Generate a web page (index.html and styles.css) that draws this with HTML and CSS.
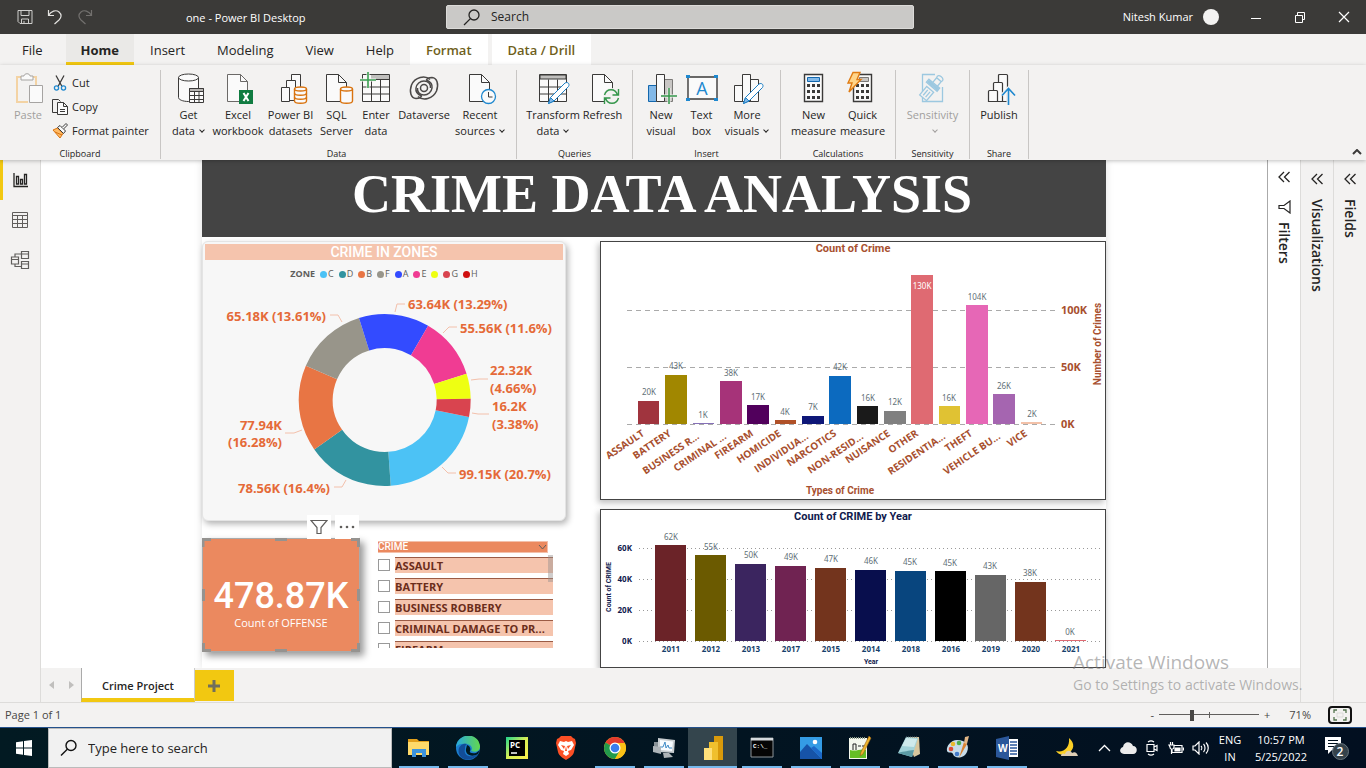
FILE: index.html
```html
<!DOCTYPE html>
<html lang="en">
<head>
<meta charset="utf-8">
<title>one - Power BI Desktop</title>
<link rel="stylesheet" href="styles.css">
</head>
<body>
<header class="titlebar">
  <div class="title-left">
    <button class="tb-btn" aria-label="Save"><svg width="16" height="16" viewBox="0 0 16 16" fill="none" stroke="#d0cfcd"><path d="M1 1.500h14v13H3l-2-2zM4 1.500v5h8v-5M4.500 14.500v-4.500h7v4.500M7 12v2"/></svg></button>
    <button class="tb-btn" aria-label="Undo"><svg width="16" height="16" viewBox="0 0 16 16" fill="none" stroke="#e4e3e1" stroke-width="1.200"><path d="M1.500 1v5.500H7M1.500 6.500C4 2 9 .5 12 3s2.500 5.500 0 8l-4.500 4"/></svg></button>
    <button class="tb-btn" aria-label="Redo"><svg width="16" height="16" viewBox="0 0 16 16" fill="none" stroke="#72706e" stroke-width="1.200"><path d="M14.500 1v5.500H9M14.500 6.500C12 2 7 .5 4 3s-2.500 5.500 0 8l4.500 4"/></svg></button>
    <span class="doc-title">one - Power BI Desktop</span>
  </div>
  <label class="title-search"><svg width="18" height="18" viewBox="0 0 18 18" fill="none" stroke="#252423" stroke-width="1.300"><circle cx="11" cy="7" r="5"/><path d="M7.400 10.600L1 17"/></svg><input type="text" placeholder="Search" aria-label="Search"></label>
  <div class="title-right">
    <span>Nitesh Kumar</span><span class="avatar"></span>
    <button class="win-btn" aria-label="Minimize"><svg width="12" height="12" viewBox="0 0 12 12" stroke="#fff"><path d="M1 7.500h10"/></svg></button>
    <button class="win-btn" aria-label="Restore"><svg width="12" height="12" viewBox="0 0 12 12" fill="none" stroke="#fff"><path d="M1.500 4.500h7v7h-7zM3.500 4V1.500h7v7H9"/></svg></button>
    <button class="win-btn" aria-label="Close"><svg width="12" height="12" viewBox="0 0 12 12" stroke="#fff" stroke-width="1.200"><path d="M1 1l10 10M11 1L1 11"/></svg></button>
  </div>
</header>

<nav class="tabs">
  <a href="#file" class="file">File</a><a href="#home" class="active">Home</a><a href="#insert">Insert</a><a href="#modeling">Modeling</a><a href="#view">View</a><a href="#help">Help</a><a href="#format" class="context">Format</a><a href="#data" class="context">Data / Drill</a>
</nav>

<section class="ribbon">
  <div class="group clipboard">
    <div class="tools">
      <button class="tool disabled"><svg viewBox="0 0 32 32" fill="none"><path d="M9 5H5v25h11M20 5h4v8" stroke="#f3d3a4" stroke-width="2"/><path d="M9 8V4h3c0-3 6-3 6 0h3v4z" fill="#fafafa" stroke="#a6a4a2"/><path d="M17.500 13.500h13v17h-13z" fill="#fafafa" stroke="#a6a4a2"/></svg><span>Paste</span></button>
      <div class="stack">
        <button><svg width="16" height="16" viewBox="0 0 16 16" fill="none"><path d="M4 .5l6 11M12 .5l-6 11" stroke="#3b3a39" stroke-width="1.300"/><circle cx="4.500" cy="13" r="2.100" stroke="#1e88cf" stroke-width="1.300"/><circle cx="11.500" cy="13" r="2.100" stroke="#1e88cf" stroke-width="1.300"/></svg>Cut</button>
        <button><svg width="16" height="16" viewBox="0 0 16 16" fill="none" stroke="#3b3a39"><path d="M5 13.500H.5V.5h6l2 2"/><path d="M5.500 3.500h6l4 4v8h-10zM11.500 3.500v4h4M8 10.500h5M8 12.500h5" fill="#fafafa"/></svg>Copy</button>
        <button><svg width="16" height="16" viewBox="0 0 16 16"><path d="M1 7l4.500-2L11 10.500 8 15z" fill="#ffbb66" stroke="#d9730f"/><path d="M3 9l7 3" stroke="#d9730f"/><path d="M5.500 4.500L8 2.500l5.500 5.500-2 2.500z" fill="#fafafa" stroke="#3b3a39"/><path d="M10 4.500l4-4 1.500 1.500-4 4" fill="#fafafa" stroke="#3b3a39"/></svg>Format painter</button>
      </div>
    </div>
    <h2>Clipboard</h2>
  </div>

  <div class="group data">
    <div class="tools">
      <button class="tool"><svg viewBox="0 0 32 32" fill="#fafafa" stroke="#3b3a39"><path d="M5.500 5.500v20c0 2 4 4 10 4 6 0 10-2 10-4v-20" /><ellipse cx="15.500" cy="5.500" rx="10" ry="3.500"/><path d="M16.500 16.500h14v14h-14z"/><path d="M16.500 16.500h14v3h-14z" fill="#b8b6b4"/><path d="M16 23.500h15M16 27.500h15M21.500 20v11M26 20v11"/></svg><span>Get<br>data<i></i></span></button>
      <button class="tool"><svg viewBox="0 0 32 32" fill="#fafafa" stroke="#6b6967"><path d="M5.500 2.500h13l7 7v20h-20z"/><path d="M18.500 2.500v7h7" fill="none"/><path d="M17 18h14v14H17z" fill="#107c41" stroke="none"/><path d="M21.500 21l5 8M26.500 21l-5 8" stroke="#fff" stroke-width="2"/></svg><span>Excel<br>workbook</span></button>
      <button class="tool"><svg viewBox="0 0 32 32" fill="#fafafa" stroke="#3b3a39"><path d="M16.500 2.500h9v24h-9z"/><path d="M11.500 8.500h9v20h-9z"/><path d="M6.500 15.500h8v14h-8z"/><g stroke="#d9730f" stroke-width="1.400"><path d="M19.500 17v12c0 3 12 3 12 0V17"/><ellipse cx="25.500" cy="17" rx="6" ry="2"/><path d="M19.500 21c0 3 12 3 12 0M19.500 25c0 3 12 3 12 0" fill="none"/></g></svg><span>Power BI<br>datasets</span></button>
      <button class="tool"><svg viewBox="0 0 32 32" fill="#fafafa" stroke="#3b3a39"><path d="M5.500 2.500h12l8 8v19h-20z"/><path d="M17.500 2.500v8h8" fill="none"/><g stroke="#d9730f" stroke-width="1.400"><path d="M19.500 17v12c0 3 12 3 12 0V17"/><ellipse cx="25.500" cy="17" rx="6" ry="2"/></g></svg><span>SQL<br>Server</span></button>
      <button class="tool"><svg viewBox="0 0 32 32" fill="#fafafa" stroke="#3b3a39"><path d="M2.500 2.500h27v27h-27z"/><path d="M11 3h18v4H11z" fill="#c0bfbd" stroke="none"/><path d="M2.500 7.500h27M2.500 15h27M2.500 22h27M11.500 7.500v22M20.500 7.500v22"/><path d="M0 8h16M8 0v16" stroke="#f3f2f1" stroke-width="3"/><path d="M0 8h16M8 0v16" stroke="#3aa052" stroke-width="1.600"/></svg><span>Enter<br>data</span></button>
      <button class="tool"><svg viewBox="0 0 32 32" fill="none" stroke="#4b4948" stroke-width="1.500"><path d="M22 7.500C17 3 7 5 3.500 13 1 20 3 26 8 26.500c3 0 5-1 5.500-2.500C9 22 7.500 19 8 16c.5-4 4-7 8-7 5 0 7 4 6.500 7"/><path d="M22 7.500C17 3 7 5 3.500 13 1 20 3 26 8 26.500c3 0 5-1 5.500-2.500C9 22 7.500 19 8 16c.5-4 4-7 8-7 5 0 7 4 6.500 7" transform="rotate(180 16 16)"/><circle cx="16" cy="16" r="3.500"/></svg><span>Dataverse</span></button>
      <button class="tool"><svg viewBox="0 0 32 32" fill="#fafafa" stroke="#3b3a39"><path d="M5.500 2.500h12l8 8v19h-20z"/><path d="M17.500 2.500v8h8" fill="none"/><circle cx="24.500" cy="24.500" r="7" stroke="#1e88cf" stroke-width="1.300"/><path d="M24.500 20v5h4" fill="none"/></svg><span>Recent<br>sources<i></i></span></button>
    </div>
    <h2>Data</h2>
  </div>

  <div class="group queries">
    <div class="tools">
      <button class="tool"><svg viewBox="0 0 32 32" fill="#fafafa" stroke="#3b3a39"><path d="M2.500 2.500h27v27h-27z"/><path d="M3 3h26v4H3z" fill="#c0bfbd"/><path d="M2.500 15h27M2.500 22h27M11.500 7.500v22M20.500 7.500v22"/><path d="M11.500 31.500l2-6L28 11c3-1.500 5 1 3.500 3.500L17 29z" stroke="#1e7fc4" fill="#fff"/><path d="M11.500 31.500l2-6 3.500 3.500z" fill="#83b9e8" stroke="#1e7fc4"/></svg><span>Transform<br>data<i></i></span></button>
      <button class="tool"><svg viewBox="0 0 32 32" fill="#fafafa" stroke="#3b3a39"><path d="M5.500 2.500h12l8 8v19h-20z"/><path d="M17.500 2.500v8h8" fill="none"/><circle cx="24.500" cy="24.500" r="8.500" fill="#f3f2f1" stroke="none"/><path d="M17.500 23c2-7 11-7 13 0M31.500 17v6h-6M31.500 26c-2 7-11 7-13 0M17.500 32v-6h6" fill="none" stroke="#35964b" stroke-width="1.400"/></svg><span>Refresh</span></button>
    </div>
    <h2>Queries</h2>
  </div>

  <div class="group insert">
    <div class="tools">
      <button class="tool"><svg viewBox="0 0 32 32" stroke="#3b3a39"><path d="M19.500 7.500h8v22h-8z" fill="#c8c6c4" stroke="#7b7977"/><path d="M3.500 13.500h8v16h-8z" fill="#83b9e8" stroke="#1267ad"/><path d="M11.500 2.500h8v27h-8z" fill="#fafafa"/><path d="M16 24h16M24 16v16" stroke="#f3f2f1" stroke-width="3"/><path d="M16 24h16M24 16v16" stroke="#35964b" stroke-width="1.500"/></svg><span>New<br>visual</span></button>
      <button class="tool"><svg viewBox="0 0 32 32"><path d="M2 5h29v22H2z" fill="#fafafa" stroke="#3b3a39" stroke-width="1.400"/><path d="M0 3h4v3H0zM28 3h4v3h-4zM0 26h4v3H0zM28 26h4v3h-4z" fill="#1e88cf"/><text x="16" y="23" class="icon-a">A</text></svg><span>Text<br>box</span></button>
      <button class="tool"><svg viewBox="0 0 32 32" stroke="#3b3a39" fill="#fafafa"><path d="M3.500 13.500h8v16h-8zM19.500 7.500h8v22h-8zM11.500 2.500h8v27h-8z"/><path d="M12.500 31.500l2-6L28 12c3-1.500 5 1 3.500 3.500L18 29z" stroke="#1e7fc4" fill="#fff"/><path d="M12.500 31.500l2-6 3.500 3.500z" fill="#83b9e8" stroke="#1e7fc4"/></svg><span>More<br>visuals<i></i></span></button>
    </div>
    <h2>Insert</h2>
  </div>

  <div class="group calc">
    <div class="tools">
      <button class="tool"><svg viewBox="0 0 32 32"><path d="M6.500 2.500h18v27h-18z" fill="#fafafa" stroke="#3b3a39" stroke-width="1.400"/><path d="M9.500 5.500h12v4h-12z" fill="#83b9e8" stroke="#1267ad"/><path d="M9 13.500h13.500M9 19.500h13.500M9 25.500h13.500" stroke="#3b3a39" stroke-width="3" stroke-dasharray="3 2"/></svg><span>New<br>measure</span></button>
      <button class="tool"><svg viewBox="0 0 32 32"><path d="M6.500 2.500h18v27h-18z" fill="#fafafa" stroke="#3b3a39" stroke-width="1.400"/><path d="M12.500 5.500h9v4h-9z" fill="#c8c6c4" stroke="#7b7977"/><path d="M9 13.500h13.500M9 19.500h13.500M9 25.500h13.500" stroke="#3b3a39" stroke-width="3" stroke-dasharray="3 2"/><path d="M6 .5h7l-3 7h4L2 20l3-9H1z" fill="#ffd58a" stroke="#e07b12" stroke-width="1.400"/></svg><span>Quick<br>measure</span></button>
    </div>
    <h2>Calculations</h2>
  </div>

  <div class="group sens">
    <div class="tools">
      <button class="tool disabled"><svg viewBox="0 0 32 32" fill="none" stroke="#9cc8e0" stroke-width="1.300"><path d="M18 2.500H5.500v27h20V15"/><g transform="rotate(40 20 10)"><path d="M12 13h14v4H12zM15 20h9v11h-9z" fill="#f3f2f1"/><path d="M17 13V7h6v6M17 7c-3-5 9-5 6 0M18 22v7M21 22v7"/><path d="M13 14h12v2H13z" fill="#9cc8e0"/></g></svg><span>Sensitivity<br><i></i></span></button>
    </div>
    <h2>Sensitivity</h2>
  </div>

  <div class="group share">
    <div class="tools">
      <button class="tool"><svg viewBox="0 0 32 32" fill="#fafafa" stroke="#3b3a39" stroke-width="1.200"><path d="M15.500 29.500v-26q0-1 1-1h7q1 0 1 1v26z"/><path d="M10.500 29.500v-18q0-1 1-1h7q1 0 1 1v18z"/><path d="M5.500 29.500v-10q0-1 1-1h7q1 0 1 1v10z"/><path d="M25.500 33V17M19 23.500l6.500-7 6.500 7" fill="none" stroke="#f3f2f1" stroke-width="4"/><path d="M25.500 33V17M19 23.500l6.500-7 6.500 7" fill="none" stroke="#1e88cf" stroke-width="1.600"/></svg><span>Publish</span></button>
    </div>
    <h2>Share</h2>
  </div>
  <button class="collapse" aria-label="Collapse ribbon"><svg width="10" height="6" viewBox="0 0 10 6" fill="none" stroke="#3b3a39" stroke-width="2"><path d="M1 5l4-4 4 4"/></svg></button>
</section>

<div class="workspace">
  <nav class="views">
    <a href="#report" class="active" aria-label="Report view"><svg width="18" height="18" viewBox="0 0 18 18" fill="none" stroke="#252423" stroke-width="1.300"><path d="M2 2v13.500h14M4.500 5.500h2v7.500h-2zM8.500 8.500h2V13h-2zM12.500 3.500h2V13h-2z"/></svg></a>
    <a href="#table" aria-label="Data view"><svg width="18" height="18" viewBox="0 0 18 18" fill="none" stroke="#605e5c"><path d="M1.500 1.500h15v15h-15zM1.500 4.500h15M1.500 8.500h15M1.500 12.500h15M6.500 4.500v12M11.500 4.500v12"/></svg></a>
    <a href="#model" aria-label="Model view"><svg width="20" height="20" viewBox="0 0 20 20" fill="none" stroke="#605e5c" stroke-width="1.200"><path d="M11.500 1.500h7v7h-7zM11.500 4h7M1.500 7h7v7h-7zM1.500 9.500h7M11.500 11.500h7v7h-7zM11.500 14h7M5 7V4h6.500M5 14v2.500h6.500"/></svg></a>
  </nav>

  <div class="middle">
    <div class="upper">
      <main class="canvas">
        <article class="page">
          <h1>CRIME DATA ANALYSIS</h1>
          <div class="board">
            <div class="left-col">
              <section class="donut-card">
                <h3>CRIME IN ZONES</h3>
                <ul class="legend">
                  <li class="name">ZONE</li>
                  <li class="c">C</li><li class="d">D</li><li class="b">B</li><li class="f">F</li><li class="a">A</li><li class="e">E</li><li class="y"></li><li class="g">G</li><li class="h">H</li>
                </ul>
                <svg class="donut" viewBox="205 287 358 233">
                  <g fill="none" stroke-width="34" transform="rotate(11.400 384.700 400)">
                    <circle cx="384.700" cy="400" r="69" pathLength="100" stroke="#4cc2f5" stroke-dasharray="20.700 79.300"/>
                    <circle cx="384.700" cy="400" r="69" pathLength="100" stroke="#3293a0" stroke-dasharray="16.400 83.600" stroke-dashoffset="-20.700"/>
                    <circle cx="384.700" cy="400" r="69" pathLength="100" stroke="#e87544" stroke-dasharray="16.280 83.720" stroke-dashoffset="-37.100"/>
                    <circle cx="384.700" cy="400" r="69" pathLength="100" stroke="#98958a" stroke-dasharray="13.610 86.390" stroke-dashoffset="-53.380"/>
                    <circle cx="384.700" cy="400" r="69" pathLength="100" stroke="#334bff" stroke-dasharray="13.290 86.710" stroke-dashoffset="-66.990"/>
                    <circle cx="384.700" cy="400" r="69" pathLength="100" stroke="#f03c93" stroke-dasharray="11.600 88.400" stroke-dashoffset="-80.280"/>
                    <circle cx="384.700" cy="400" r="69" pathLength="100" stroke="#eeff12" stroke-dasharray="4.700 95.300" stroke-dashoffset="-91.880"/>
                    <circle cx="384.700" cy="400" r="69" pathLength="100" stroke="#d9444f" stroke-dasharray="3.420 96.580" stroke-dashoffset="-96.580"/>
                  </g>
                  <g fill="none" stroke="#f3c0ab"><path d="M395 312l2-8h8M443 333l6-6h8M471 380l8-1h9M472 413l6 1h11M442 467l6 6h8M346 480l-4 7h-8M302 430l-8 3h-9M342 322l-4-7h-8"/></g>
                  <g class="donut-label">
                    <text x="408" y="309">63.64K (13.29%)</text><text x="460" y="333">55.56K (11.6%)</text>
                    <text x="490" y="375">22.32K</text><text x="490" y="393">(4.66%)</text>
                    <text x="492" y="411">16.2K</text><text x="492" y="429">(3.38%)</text>
                    <text x="459" y="479">99.15K (20.7%)</text>
                  </g>
                  <g class="donut-label left">
                    <text x="326" y="321">65.18K (13.61%)</text>
                    <text x="282" y="430">77.94K</text><text x="282" y="447">(16.28%)</text>
                    <text x="330" y="493">78.56K (16.4%)</text>
                  </g>
                </svg>
              </section>
              <div class="lower-left">
                <section class="kpi">
                  <div class="kpi-tools">
                    <button aria-label="Filters"><svg width="18" height="16" viewBox="0 0 18 16" fill="none" stroke="#605e5c" stroke-width="1.200"><path d="M1 1.500h16l-6 7v6H7v-6z"/></svg></button>
                    <button aria-label="More options"><svg width="16" height="4" viewBox="0 0 16 4" fill="#605e5c"><circle cx="2" cy="2" r="1.300"/><circle cx="8" cy="2" r="1.300"/><circle cx="14" cy="2" r="1.300"/></svg></button>
                  </div>
                  <svg class="handles" viewBox="0 0 158 114" preserveAspectRatio="none" fill="none" stroke="#959390" stroke-width="3"><path d="M1 9V1.500h8M73 1.500h12M149 1.500h7.500V9M156.500 51v12M156.500 105v7.500H149M85 112.500H73M9 112.500H1.500V105M1.500 63V51"/></svg>
                  <strong>478.87K</strong>
                  <span>Count of OFFENSE</span>
                </section>
                <section class="slicer">
                  <button class="slicer-head">CRIME<svg width="9" height="6" viewBox="0 0 9 6" fill="none" stroke="#605e5c"><path d="M1 1l3.500 4L8 1"/></svg></button>
                  <div class="slicer-list">
                    <label><input type="checkbox"><span>ASSAULT</span></label>
                    <label><input type="checkbox"><span>BATTERY</span></label>
                    <label><input type="checkbox"><span>BUSINESS ROBBERY</span></label>
                    <label><input type="checkbox"><span>CRIMINAL DAMAGE TO PR...</span></label>
                    <label><input type="checkbox"><span>FIREARM</span></label>
                    <div class="thumb"></div>
                  </div>
                </section>
              </div>
            </div>

            <div class="right-col">
              <section class="chart">
                <svg viewBox="601 242 504 257">
                  <text class="rust-title large mid" x="853" y="252">Count of Crime</text>
                  <g stroke="#aaa" stroke-dasharray="5 4"><path d="M627 310.500h428M627 367.500h428M627 424.500h428"/></g>
                  <g>
                    <rect x="638" y="401" width="21" height="23" fill="#a0343e"/><rect x="665" y="375" width="22" height="49" fill="#a18700"/><rect x="693" y="423" width="21" height="1" fill="#8671b8"/><rect x="720" y="381" width="22" height="43" fill="#a63379"/><rect x="747" y="405" width="22" height="19" fill="#51005c"/><rect x="775" y="420" width="21" height="4" fill="#b05128"/><rect x="802" y="416" width="22" height="8" fill="#0e1778"/><rect x="829" y="376" width="22" height="48" fill="#0c6abf"/><rect x="857" y="406" width="21" height="18" fill="#1a1a1a"/><rect x="884" y="411" width="22" height="13" fill="#808080"/><rect x="911" y="275" width="22" height="149" fill="#df6a72"/><rect x="939" y="406" width="21" height="18" fill="#e0c233"/><rect x="966" y="305" width="22" height="119" fill="#e667b6"/><rect x="993" y="394" width="22" height="30" fill="#a565b0"/><rect x="1021" y="422" width="21" height="2" fill="#f3c1a8"/>
                  </g>
                  <g class="value mid">
                    <text x="649" y="395">20K</text><text x="676" y="369">43K</text><text x="703" y="418">1K</text><text x="731" y="376">38K</text><text x="758" y="400">17K</text><text x="785" y="415">4K</text><text x="813" y="410">7K</text><text x="840" y="370">42K</text><text x="868" y="401">16K</text><text x="895" y="405">12K</text><text x="922" y="289" class="inside">130K</text><text x="949" y="401">16K</text><text x="977" y="300">104K</text><text x="1004" y="389">26K</text><text x="1032" y="417">2K</text>
                  </g>
                  <g class="category">
                    <text transform="translate(645 435) rotate(-34)">ASSAULT</text><text transform="translate(672 435) rotate(-34)">BATTERY</text><text transform="translate(700 438) rotate(-34)">BUSINESS R...</text><text transform="translate(727 438) rotate(-34)">CRIMINAL ...</text><text transform="translate(754 435) rotate(-34)">FIREARM</text><text transform="translate(782 435) rotate(-34)">HOMICIDE</text><text transform="translate(809 438) rotate(-34)">INDIVIDUA...</text><text transform="translate(837 435) rotate(-34)">NARCOTICS</text><text transform="translate(864 438) rotate(-34)">NON-RESID...</text><text transform="translate(891 435) rotate(-34)">NUISANCE</text><text transform="translate(919 435) rotate(-34)">OTHER</text><text transform="translate(946 438) rotate(-34)">RESIDENTIA...</text><text transform="translate(973 435) rotate(-34)">THEFT</text><text transform="translate(1001 438) rotate(-34)">VEHICLE BU...</text><text transform="translate(1028 435) rotate(-34)">VICE</text>
                  </g>
                  <g class="rust-axis"><text x="1061" y="314">100K</text><text x="1061" y="371">50K</text><text x="1061" y="428">0K</text></g>
                  <text class="rust-title mid" transform="translate(1101 344) rotate(-90)">Number of Crimes</text>
                  <text class="rust-title mid" x="840" y="494">Types of Crime</text>
                </svg>
              </section>
              <section class="chart">
                <svg viewBox="601 510 504 157">
                  <text class="navy-title mid" x="853" y="520">Count of CRIME by Year</text>
                  <g stroke="#999" stroke-dasharray="1 3"><path d="M639 548.500h463M639 579.500h463M639 610.500h463M639 641.500h463"/></g>
                  <rect x="655" y="545" width="31" height="96" fill="#6b2328"/><rect x="695" y="555" width="31" height="86" fill="#6b5a00"/><rect x="735" y="564" width="31" height="77" fill="#3b255f"/><rect x="775" y="566" width="31" height="75" fill="#702352"/><rect x="815" y="568" width="31" height="73" fill="#73341d"/><rect x="855" y="570" width="31" height="71" fill="#080e4d"/><rect x="895" y="571" width="31" height="70" fill="#08457e"/><rect x="935" y="571" width="31" height="70" fill="#000"/><rect x="975" y="575" width="31" height="66" fill="#666"/><rect x="1015" y="582" width="31" height="59" fill="#73341d"/><rect x="1055" y="640" width="31" height="1" fill="#df6a72"/>
                  <g class="value mid"><text x="671" y="540">62K</text><text x="711" y="550">55K</text><text x="751" y="558">50K</text><text x="791" y="560">49K</text><text x="831" y="562">47K</text><text x="871" y="564">46K</text><text x="910" y="565">45K</text><text x="950" y="566">45K</text><text x="990" y="569">43K</text><text x="1030" y="576">38K</text><text x="1070" y="635">0K</text></g>
                  <g class="year mid"><text x="671" y="652">2011</text><text x="711" y="652">2012</text><text x="751" y="652">2013</text><text x="791" y="652">2017</text><text x="831" y="652">2015</text><text x="871" y="652">2014</text><text x="911" y="652">2018</text><text x="951" y="652">2016</text><text x="991" y="652">2019</text><text x="1031" y="652">2020</text><text x="1071" y="652">2021</text></g>
                  <g class="navy-axis"><text x="632" y="551">60K</text><text x="632" y="582">40K</text><text x="632" y="613">20K</text><text x="632" y="644">0K</text></g>
                  <text class="navy-small mid" transform="translate(611 587) rotate(-90)">Count of CRIME</text>
                  <text class="navy-small mid" x="871" y="664">Year</text>
                </svg>
              </section>
            </div>
          </div>
        </article>
      </main>
      <aside class="pane filters"><button aria-label="Expand filters"><svg width="12" height="12" viewBox="0 0 12 12" fill="none" stroke="#252423" stroke-width="1.300"><path d="M6 1L1 6l5 5M11.500 1l-5 5 5 5"/></svg></button><svg class="funnel" width="14" height="14" viewBox="0 0 14 14" fill="none" stroke="#252423" stroke-width="1.200"><path d="M13 1v12L7 8.500H2v-3h5z"/></svg><span>Filters</span></aside>
    </div>
    <nav class="page-tabs">
      <button class="arrow" aria-label="Previous page"><svg width="5" height="8" viewBox="0 0 5 8" fill="#c0bfbd"><path d="M5 0v8L0 4z"/></svg></button>
      <button class="arrow" aria-label="Next page"><svg width="5" height="8" viewBox="0 0 5 8" fill="#c0bfbd"><path d="M0 0v8l5-4z"/></svg></button>
      <a href="#crime-project" class="page-tab">Crime Project</a>
      <button class="add" aria-label="New page"><svg width="12" height="12" viewBox="0 0 12 12" stroke="#716f5c" stroke-width="3"><path d="M0 6h12M6 0v12"/></svg></button>
    </nav>
  </div>

  <aside class="pane"><button aria-label="Expand visualizations"><svg width="12" height="12" viewBox="0 0 12 12" fill="none" stroke="#252423" stroke-width="1.300"><path d="M6 1L1 6l5 5M11.500 1l-5 5 5 5"/></svg></button><span>Visualizations</span></aside>
  <aside class="pane"><button aria-label="Expand fields"><svg width="12" height="12" viewBox="0 0 12 12" fill="none" stroke="#252423" stroke-width="1.300"><path d="M6 1L1 6l5 5M11.500 1l-5 5 5 5"/></svg></button><span>Fields</span></aside>
  <div class="watermark"><b>Activate Windows</b><span>Go to Settings to activate Windows.</span></div>
</div>

<footer class="status">
  <span>Page 1 of 1</span>
  <div class="zoom"><button aria-label="Zoom out">-</button><input type="range" min="10" max="200" value="71" aria-label="Zoom"><button aria-label="Zoom in">+</button><span>71%</span>
  <button class="fit" aria-label="Fit to page"><svg width="14" height="12" viewBox="0 0 14 12" fill="none" stroke="#54744f" stroke-width="1.300"><path d="M1 4V1h3M10 1h3v3M13 8v3h-3M4 11H1V8"/><path d="M4 4h6v4H4z" stroke="#cfcdcb" stroke-width=".6"/></svg></button></div>
</footer>

<div class="taskbar">
  <button class="start" aria-label="Start"><svg width="16" height="16" viewBox="0 0 16 16" fill="#fff"><path d="M0 2.200l7-1v6.300H0zM8 1l8-1v7.500H8zM0 8.500h7v6.300l-7-1zM8 8.500h8V16l-8-1z"/></svg></button>
  <label class="task-search"><svg width="18" height="18" viewBox="0 0 18 18" fill="none" stroke="#111" stroke-width="1.400"><circle cx="11" cy="6.500" r="5"/><path d="M7.300 10.200L1 16.500"/></svg><input type="text" placeholder="Type here to search" aria-label="Type here to search"></label>
  <div class="apps">
    <button class="open" aria-label="File Explorer"><svg viewBox="0 0 24 24"><path d="M1 3h9l2 2h10v5H1z" fill="#e3a01b"/><path d="M1 6h21v13H1z" fill="#ffda6a"/><path d="M5 21v-8h14v8h-4v-4H9v4z" fill="#3c93dc"/></svg></button>
    <button class="open" aria-label="Edge"><svg viewBox="0 0 24 24"><defs><linearGradient id="edgeTop" x1="0" x2="1"><stop offset="0" stop-color="#28a9e0"/><stop offset="1" stop-color="#63d84d"/></linearGradient></defs><circle cx="12" cy="12" r="12" fill="#1b7fd0"/><path d="M0 11C1-3 22-5 24 10c.3 5-4 7-9 5 2-2 1-6-4-7C6 7 2 8 0 11z" fill="url(#edgeTop)"/><path d="M9 13c-2 6 5 10 13 5-4 7-16 8-19 0-2-7 3-11 8-10-2 1-2 3-2 5z" fill="#124d98"/><path d="M11 9c3 1 4 4 3 6-1 1 1 3 6 2l4-3-2 4c-7 4-13 0-12-5z" fill="#001a24"/></svg></button>
    <button aria-label="PyCharm"><svg viewBox="0 0 24 24"><defs><linearGradient id="py" x1="0" x2="1" y1="0" y2="1"><stop offset="0" stop-color="#20d68d"/><stop offset=".5" stop-color="#d8ee55"/><stop offset="1" stop-color="#fcf04c"/></linearGradient></defs><path d="M1 1h22v22H1z" fill="url(#py)"/><path d="M4 4h16v16H4z"/><text x="5" y="12" class="icon-pc">PC</text><path d="M6 17h6" stroke="#fff" stroke-width="1.500"/></svg></button>
    <button aria-label="Brave"><svg viewBox="0 0 24 24"><path d="M7 0h10l2 2 2 1 1 4-2 9c-1 4-5 6-8 8-3-2-7-4-8-8L2 7l1-4 2-1z" fill="#fb4f25"/><path d="M6 5l4 1 2-1 2 1 4-1 2 4-3 5-3 1 1 3-3 2-3-2 1-3-3-1-3-5z" fill="#fff"/><path d="M7 9l4 1-1 3zM17 9l-4 1 1 3zM12 10l-1 5h2z" fill="#fb4f25"/></svg></button>
    <button class="open" aria-label="Chrome"><svg viewBox="0 0 24 24"><circle cx="12" cy="12" r="11" fill="#fbc116"/><path d="M12 12L2.500 6.500a11 11 0 0 1 19 0z" fill="#e33b2e"/><path d="M12 12L2.500 6.500a11 11 0 0 0 9.500 16.500l5-8z" fill="#229a4c"/><path d="M12 7h9.800a11 11 0 0 1-9.800 16l4.500-8z" fill="#fbc116"/><circle cx="12" cy="12" r="5.500" fill="#fff"/><circle cx="12" cy="12" r="4.300" fill="#3b7ded"/></svg></button>
    <button class="open" aria-label="System monitor"><svg viewBox="0 0 24 24"><path d="M2 6h9v10H2z" fill="#899297"/><path d="M6 2l17 2-1 13-16-1z" fill="#c9ced1"/><path d="M8 4l13 1.500-1 9.500-12-1z" fill="#f7fbff"/><path d="M8 11h3l2-5 1 6 2-3 1 3h3" fill="none" stroke="#3f8bc7"/><path d="M1 10l8 1v7l-8-2zM11 17h6l4 4-9 1z" fill="#aeb4b8"/></svg></button>
    <button class="open current" aria-label="Power BI"><svg viewBox="0 0 24 24"><path d="M13 0h9v24h-9z" fill="#d99a0b"/><path d="M8 6h9v18H8z" fill="#f0c02e"/><path d="M3 12h8v12H3z" fill="#ffe07a"/></svg></button>
    <button class="open" aria-label="Command prompt"><svg viewBox="0 0 24 24"><path d="M1 2h22v19H1z" fill="#050505" stroke="#8d9499"/><path d="M1 2h22v2.500H1z" fill="#d4d9dc"/><text x="3" y="12" class="icon-cmd">C:\_</text></svg></button>
    <button class="open" aria-label="Photos"><svg viewBox="0 0 24 24"><path d="M1 1h22v22H1z" fill="#349ce5"/><path d="M1 16l7-8 15 15H1z" fill="#1653a8"/><path d="M12 12l3-2 8 7v6z" fill="#1c68c8"/><circle cx="16" cy="6" r="2.300" fill="#fff"/></svg></button>
    <button class="open" aria-label="Notepad++"><svg viewBox="0 0 24 24"><path d="M1 2h18v21H1z" fill="#f5f8ed"/><path d="M2 14c7 2 10-2 16 0v8H2z" fill="#65be25"/><path d="M2 2h16" stroke="#8b9a8a" stroke-width="2" stroke-dasharray="1 1"/><path d="M5 14V8h3v6M10 10h3M14 10h3" fill="none" stroke="#222"/><path d="M21 0l2 2-8 16-3 2 1-4z" fill="#efb52d" stroke="#956018" stroke-width=".6"/></svg></button>
    <button class="open" aria-label="Notepad"><svg viewBox="0 0 24 24"><path d="M9 1h13l1 17-6 3z" fill="#d8c69d"/><path d="M9 1l12 1-6 19-14-4z" fill="#a3d3d9"/><path d="M9 2l11 1-3 8-12-1z" fill="#cfeaec"/><path d="M1 17c7-2 10-2 16-3l-2 7z" fill="#5c9ba5"/><path d="M9 1h12" stroke="#62737a" stroke-dasharray="1 1"/></svg></button>
    <button class="open" aria-label="Paint"><svg viewBox="0 0 24 24"><path d="M11 4C20 4 24 9 21 16c-3 7-13 7-14 2-1-3-5 0-6-3C0 10 5 4 11 4z" fill="#c8dce9"/><circle cx="5" cy="13" r="2.300" fill="#db4b35"/><circle cx="7" cy="8" r="2.300" fill="#e9b92e"/><circle cx="13" cy="7" r="2.300" fill="#4fae4f"/><circle cx="11" cy="18" r="2.300" fill="#447ac9"/><path d="M18 6l3 2-8 14z" fill="#d98332"/><path d="M18 7l1-6 4-1-2 8z" fill="#e3b786"/></svg></button>
    <button class="open" aria-label="Word"><svg viewBox="0 0 24 24"><path d="M11 3h12v18H11z" fill="#fff"/><path d="M15 6h7M15 9h7M15 12h7M15 15h7M15 18h7" stroke="#2b579a" stroke-width="1.500"/><path d="M1 3l13-3v24L1 21z" fill="#2b579a"/><text x="3" y="16" class="icon-w">W</text></svg></button>
  </div>
  <div class="tray">
    <button class="wide" aria-label="Weather"><svg width="24" height="20" viewBox="0 0 24 20"><path d="M13 0c6 5 6 12-2 16-5 2-9 0-11-3C8 15 14 9 13 0z" fill="#fbcf26"/><path d="M5 18c0-3 3-3 4-2 1-4 6-4 7-1 3-2 5 0 6 3z" fill="#dfcfb5"/></svg></button>
    <button aria-label="Show hidden icons"><svg width="13" height="8" viewBox="0 0 13 8" fill="none" stroke="#fff" stroke-width="1.300"><path d="M1 7l5.500-5.500L12 7"/></svg></button>
    <button aria-label="OneDrive"><svg width="17" height="12" viewBox="0 0 17 12"><path d="M4 12C-1 12-1 6 3 5c1-6 8-6 10-1 5 0 5 8 0 8z" fill="#ececec"/></svg></button>
    <button aria-label="Meet now"><svg width="12" height="16" viewBox="0 0 12 16" fill="none" stroke="#fff" stroke-width="1.200"><path d="M1 4.500h7v7H1zM8 7l3-1.500v5L8 9M2 2c2-1.500 4-1.500 6 0M2 14c2 1.500 4 1.500 6 0"/></svg></button>
    <button aria-label="Battery"><svg width="16" height="13" viewBox="0 0 16 13" fill="none" stroke="#fff" stroke-width="1.200"><path d="M6 3.500h8v7H4V8M15.500 5.500v3M1 3h5v2c0 3-4 3-4 0zM2.500 0v3M4.500 0v3M3.500 7v5"/><path d="M7 6h5v3H7z" fill="#fff"/></svg></button>
    <button aria-label="Volume"><svg width="17" height="14" viewBox="0 0 17 14" fill="none" stroke="#fff" stroke-width="1.200"><path d="M1 5v4h2l4 4V1L3 5zM9 5c1 1 1 3 0 4M11.500 3c2 2 2 6 0 8M14 1.500c3 3 3 8 0 11"/></svg></button>
    <button class="lang">ENG<br>IN</button>
    <button class="clock">10:57 PM<br>5/25/2022</button>
    <button class="notice" aria-label="Notifications"><svg width="26" height="24" viewBox="0 0 26 24"><path d="M1 1h16v13H8l-4 4v-4H1z" fill="#fff"/><path d="M4 4.500h10M4 7.500h10M4 10.500h6" stroke="#00101c"/><circle cx="16.500" cy="15.500" r="8" fill="#35424a" stroke="#68757d"/><text x="16" y="20" class="icon-n">2</text></svg></button>
  </div>
</div>
</body>
</html>
```

FILE: styles.css
```css
* { box-sizing: border-box; }
body { margin: 0; height: 100vh; min-height: 640px; display: flex; flex-direction: column; overflow: hidden; background: #f3f2f1; color: #252423; font: 11px/16px "Open Sans", "Noto Sans", sans-serif; }
button, input { font: inherit; color: inherit; }
button { border: 0; padding: 0; background: none; }
input { padding: 0; }
a { color: inherit; text-decoration: none; }
h1, h2, h3, ul { margin: 0; padding: 0; font-weight: 400; list-style: none; }
svg { display: block; flex: none; }

.titlebar { height: 34px; flex: none; display: grid; grid-template-columns: 446fr 468fr 452fr; align-items: center; background: #3b3a38; color: #fff; }
.title-left { display: flex; align-items: center; gap: 14px; padding-left: 17px; }
.doc-title { padding-left: 79px; padding-top: 2px; }
.title-search { height: 24px; display: flex; align-items: center; gap: 10px; padding-left: 16px; background: #cac9c7; border: 1px solid #dcdbd9; border-radius: 2px; }
.title-search input { flex: 1; min-width: 0; border: 0; background: none; font-size: 12px; }
input::placeholder { color: #252423; opacity: 1; }
.title-right { display: flex; align-items: center; justify-content: flex-end; height: 34px; }
.avatar { width: 16px; height: 16px; margin: 0 15px 0 10px; border-radius: 50%; background: #f3f2f1; }
.win-btn { width: 44px; height: 34px; display: flex; align-items: center; justify-content: center; }

.tabs { height: 31px; flex: none; display: flex; padding-left: 6px; font-size: 13px; line-height: 32px; }
.tabs a { padding: 0 16px; }
.tabs .file { margin-right: 7px; }
.tabs .active { padding: 0 15px; font-weight: 700; background: #eae9e7; border-bottom: 3px solid #f2c811; }
.tabs .context { padding: 0 16px; font-weight: 600; color: #6f5f1c; background: #fff; margin-right: 4px; }

.ribbon { height: 95px; flex: none; display: flex; position: relative; z-index: 2; padding: 5px 0 1px; box-shadow: 0 1px 4px rgba(0, 0, 0, .25); background: #f3f2f1; }
.group { display: flex; flex-direction: column; justify-content: space-between; border-right: 1px solid #c8c6c4; padding: 0 8px; }
.group h2 { font-size: 9px; line-height: 10px; text-align: center; }
.tools { display: grid; justify-content: center; }
.tool { display: flex; flex-direction: column; align-items: center; white-space: nowrap; padding-top: 2px; gap: 3px; }
.tool svg { width: 32px; height: 32px; overflow: visible; }
.tool i { display: inline-block; width: 4px; height: 4px; margin: 0 1px 3px 5px; border: solid currentColor; border-width: 0 1px 1px 0; transform: rotate(45deg); }
.disabled { color: #a19f9d; }
.clipboard { width: 161px; padding: 0; }
.clipboard .tools { grid-template-columns: 40px 1fr; padding-left: 8px; justify-content: start; }
.stack { display: flex; flex-direction: column; padding: 1px 0 0 4px; }
.stack button { height: 24px; display: flex; align-items: center; gap: 4px; white-space: nowrap; }
.data { padding-left: 4px; }
.data .tools { grid-template-columns: 47px 52px 53px 39px 40px 56px 56px; }
.queries .tools { grid-template-columns: 56px 43px; }
.insert .tools { grid-template-columns: 40px 41px 50px; }
.calc .tools { grid-template-columns: 49px 49px; }
.sens .tools { grid-template-columns: 57px; }
.share .tools { grid-template-columns: 42px; }
.icon-a { font: 18px "Open Sans", sans-serif; fill: #1e88cf; text-anchor: middle; }
.collapse { margin-left: auto; align-self: flex-end; padding: 4px 4px; }

.workspace { flex: 1; min-height: 0; display: flex; position: relative; border-bottom: 1px solid #dddcda; }
.views { width: 41px; flex: none; display: flex; flex-direction: column; border-right: 1px solid #dddcda; }
.views a { height: 40px; display: flex; align-items: center; justify-content: center; }
.views .active { border-left: 3px solid #f2c811; padding-right: 2px; }
.middle { flex: 1; min-width: 0; display: flex; flex-direction: column; }
.upper { flex: 1; min-height: 0; display: flex; background: #fff; }
.canvas { flex: 1; min-width: 0; overflow: hidden; }
.page { width: 74%; min-width: 904px; max-width: 904px; margin: 0 auto; background: #fff; box-shadow: 0 0 8px rgba(0, 0, 0, .12); }
.page h1 { height: 77px; background: #444; color: #fff; text-align: center; font: 700 54px/68px "Liberation Serif", serif; padding-left: 16px; }
.board { display: flex; gap: 34px; padding-top: 4px; }
.left-col { flex: 364; min-width: 0; }
.right-col { flex: 506; min-width: 0; display: flex; flex-direction: column; gap: 9px; }

.donut-card { background: #f7f7f7; border: 1px solid #e4e4e4; border-radius: 6px; box-shadow: 2px 3px 6px rgba(0, 0, 0, .3); padding: 2px 2px 0; }
.donut-card h3 { background: #f5c4ad; color: #fff; text-align: center; font: 500 14px/16px Roboto, sans-serif; }
.legend { display: flex; justify-content: center; gap: 5px; height: 27px; align-items: center; font-size: 9px; line-height: 12px; color: #605e5c; padding-top: 1px; }
.legend .name { font-weight: 700; font-size: 9px; }
.legend .name::before { display: none; }
.legend li { display: flex; align-items: center; gap: 1px; }
.legend li::before { content: ""; width: 7px; height: 7px; border-radius: 50%; background: currentColor; }
.legend .c::before { background: #4cc2f5; }
.legend .d::before { background: #3293a0; }
.legend .b::before { background: #e87544; }
.legend .f::before { background: #98958a; }
.legend .a::before { background: #334bff; }
.legend .e::before { background: #f03c93; }
.legend .y::before { background: #eeff12; }
.legend .g::before { background: #d9444f; }
.legend .h::before { background: #d01010; }
.donut { width: 100%; }
.donut-label { font: 700 13px "Open Sans", sans-serif; fill: #e56a38; }
.donut-label.left { text-anchor: end; }

.lower-left { display: flex; align-items: flex-start; gap: 18px; padding-top: 17px; }
.kpi { flex: none; width: 158px; height: 114px; position: relative; display: flex; flex-direction: column; align-items: center; padding-top: 38px; background: #eb895f; color: #fff; border: 1px solid #aaa; box-shadow: 4px 4px 7px rgba(0, 0, 0, .4); }
.kpi strong { font: 500 36px/38px Roboto, sans-serif; }
.kpi > span { font-size: 11px; line-height: 16px; }
.handles { position: absolute; inset: -1px; width: 158px; height: 114px; }
.kpi-tools { position: absolute; right: 0; bottom: 112px; display: flex; gap: 4px; }
.kpi-tools button { width: 24px; height: 24px; background: #fff; display: flex; align-items: center; justify-content: center; }
.slicer { flex: none; width: 175px; padding-top: 3px; }
.slicer-head { width: 170px; height: 12px; display: flex; justify-content: space-between; align-items: center; background: #eb895f; border: 1px solid #f3c0ab; border-left: 0; color: #fff; font: 500 10px/10px Roboto, sans-serif; }
.slicer-list { position: relative; height: 95px; overflow: hidden; display: flex; flex-direction: column; gap: 5px; padding-top: 4px; }
.slicer-list label { display: flex; flex: none; align-items: center; gap: 5px; height: 16px; }
.slicer-list input { appearance: none; width: 12px; height: 12px; margin: 0; border: 1px solid #999; background: #fff; flex: none; }
.slicer-list span { flex: 1; min-width: 0; height: 16px; background: #f5c4ad; border-top: 1px solid #9b5b45; color: #6b2d1b; font-weight: 700; white-space: nowrap; overflow: hidden; }
.thumb { position: absolute; right: 0; top: 2px; width: 5px; height: 27px; background: rgba(150, 145, 142, .45); }

.chart { border: 1px solid #444; background: #fff; box-shadow: -2px 3px 6px rgba(0, 0, 0, .25); }
.chart svg { width: 100%; }
.mid { text-anchor: middle; }
.rust-title { font: 700 10px Roboto, sans-serif; fill: #a8502f; }
.rust-title.large { font-size: 11px; }
.rust-axis { font: 700 11px "Open Sans", sans-serif; fill: #a8502f; }
.category { font: 700 10px "Open Sans", sans-serif; fill: #a8502f; text-anchor: end; }
.value { font: 8px "Noto Sans", sans-serif; fill: #5f7077; }
.inside { fill: #fff; }
.year { font: 700 8px "Open Sans", sans-serif; fill: #173f6b; }
.navy-title { font: 700 11px Roboto, sans-serif; fill: #101a4d; }
.navy-axis { font: 700 8px "Open Sans", sans-serif; fill: #101a4d; text-anchor: end; }
.navy-small { font: 700 7px Roboto, sans-serif; fill: #101a4d; }

.pane { width: 33px; flex: none; display: flex; flex-direction: column; align-items: center; gap: 14px; padding-top: 13px; border-left: 1px solid #dddcda; font-size: 14px; font-weight: 600; }
.pane span { writing-mode: vertical-rl; }
.filters { background: #fff; border-color: #aaa; padding-top: 11px; gap: 8px; }
.funnel { margin-top: 9px; }
.page-tabs { height: 34px; flex: none; display: flex; align-items: stretch; }
.arrow { width: 20px; display: flex; align-items: center; justify-content: center; }
.page-tab { padding: 0 20px; line-height: 36px; background: #fff; border-bottom: 4px solid #f2c811; border-left: 1px solid #aaa; border-right: 1px solid #ccc; font-weight: 600; }
.add { width: 39px; margin: 2px 0 1px; background: #f2c811; display: flex; align-items: center; justify-content: center; }
.watermark { position: absolute; right: 57px; bottom: 7px; width: 236px; color: rgba(120, 120, 120, .55); white-space: nowrap; }
.watermark b, .watermark span { display: block; font-weight: 400; font-size: 14px; line-height: 20px; }
.watermark b { font-size: 19px; line-height: 26px; }

.status { height: 24px; flex: none; display: flex; align-items: center; justify-content: space-between; padding: 0 14px 0 5px; color: #484644; }
.zoom { display: flex; align-items: center; gap: 5px; }
.zoom span { padding: 0 12px 0 14px; }
.zoom input { appearance: none; width: 100px; height: 12px; margin: 0; background: linear-gradient(#605e5c, #605e5c) 0 5px / 100% 1px no-repeat, linear-gradient(#605e5c, #605e5c) 50% 3px / 1px 6px no-repeat; }
.zoom input::-webkit-slider-thumb { appearance: none; width: 4px; height: 11px; background: #484644; }
.fit { width: 24px; height: 18px; border: 2px solid #111; border-radius: 4px; display: flex; align-items: center; justify-content: center; }

.taskbar { height: 41px; flex: none; display: flex; border-top: 1px solid #24518c; background: linear-gradient(90deg, #021a22, #020f20); color: #fff; }
.start { width: 48px; display: flex; align-items: center; justify-content: center; }
.task-search { width: 344px; flex: 0 1 344px; display: flex; align-items: center; gap: 10px; padding-left: 11px; background: #f1f1f1; border: 1px solid #bbb; color: #222; }
.task-search input { flex: 1; min-width: 0; border: 0; background: none; font-size: 13px; }
.apps { display: flex; padding-left: 2px; }
.apps button { width: 49px; display: flex; align-items: center; justify-content: center; position: relative; }
.apps button svg { width: 24px; height: 24px; }
.apps .open::after { content: ""; position: absolute; left: 5px; right: 4px; bottom: 0; height: 2px; background: #76b9ed; }
.apps .current { background: #34454d; }
.apps .current::after { left: 0; right: 0; }
.icon-pc { font: 700 8px "Open Sans", sans-serif; fill: #fff; }
.icon-cmd { font: 700 6px "Liberation Mono", monospace; fill: #fff; }
.icon-w { font: 700 10px "Open Sans", sans-serif; fill: #fff; }
.icon-n { font: 600 12px "Open Sans", sans-serif; fill: #fff; text-anchor: middle; }
.tray { margin-left: auto; display: flex; padding-right: 6px; }
.tray button { width: 24px; display: flex; align-items: center; justify-content: center; }
.tray .wide { width: 48px; }
.tray .lang, .tray .clock { display: block; width: 36px; line-height: 17px; text-align: center; }
.tray .clock { width: 66px; }
.tray .notice { width: 46px; }
```
